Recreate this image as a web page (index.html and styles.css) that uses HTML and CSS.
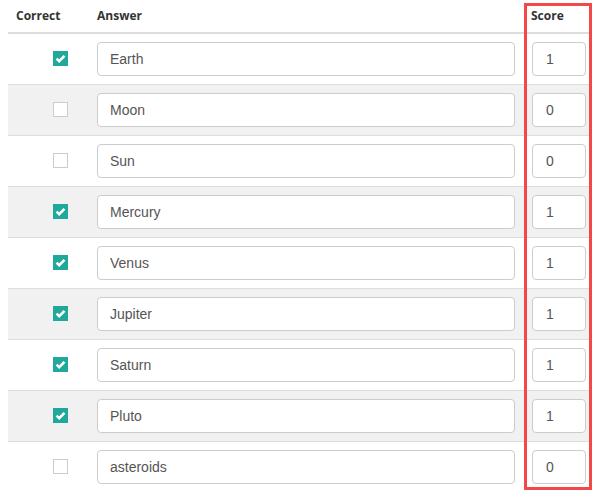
FILE: index.html
```html
<!DOCTYPE html>
<html lang="en">
<head>
    <meta charset="UTF-8">
    <meta name="viewport" content="width=device-width, initial-scale=1.0">
    <title>Answers</title>
    <link rel="stylesheet" href="styles.css">
</head>
<body>
    <div class="answers">
        <table class="answer-table">
            <thead>
                <tr>
                    <th class="col-correct">Correct</th>
                    <th class="col-answer">Answer</th>
                    <th class="col-score">Score</th>
                </tr>
            </thead>
            <tbody id="answerRows"></tbody>
        </table>
        <div class="score-highlight"></div>
    </div>

    <script>
        const answers = [
            { text: "Earth", correct: true },
            { text: "Moon", correct: false },
            { text: "Sun", correct: false },
            { text: "Mercury", correct: true },
            { text: "Venus", correct: true },
            { text: "Jupiter", correct: true },
            { text: "Saturn", correct: true },
            { text: "Pluto", correct: true },
            { text: "asteroids", correct: false }
        ];
        function renderRows() {
            const body = document.getElementById('answerRows');
            body.innerHTML = '';
            answers.forEach(answer => {
                const row = document.createElement('tr');
                row.innerHTML = `
                    <td class="col-correct">
                        <span class="check ${answer.correct ? 'checked' : ''}">
                            <svg viewBox="0 0 15 15" width="15" height="15"><path d="M3.5 7.6 L6.2 10.2 L11.5 4.8" fill="none" stroke="#fff" stroke-width="2.6"/></svg>
                        </span>
                    </td>
                    <td class="col-answer"><input class="field" type="text" value="${answer.text}"></td>
                    <td class="col-score"><input class="field score" type="text" value="${answer.correct ? 1 : 0}"></td>
                `;
                row.querySelector('.check').addEventListener('click', () => {
                    answer.correct = !answer.correct;
                    renderRows();
                });
                body.appendChild(row);
            });
        }
        renderRows();
    </script>
</body>
</html>
```

FILE: styles.css
```css
* {
    box-sizing: border-box;
}

body {
    margin: 0 8px;
    background: #fff;
    font-family: "Liberation Sans", Arial, sans-serif;
    color: #333;
}

.answers {
    position: relative;
    width: 583px;
}

.answer-table {
    width: 100%;
    border-collapse: collapse;
}

.answer-table th {
    height: 33px;
    padding: 0 8px 1px;
    text-align: left;
    font-family: "Open Sans", sans-serif;
    font-size: 12px;
    font-weight: 700;
    color: #333;
    border-bottom: 2px solid #ddd;
    vertical-align: middle;
}

.answer-table td {
    height: 51px;
    padding: 0 8px;
    border-top: 1px solid #ddd;
    vertical-align: middle;
}

.answer-table tbody tr:nth-child(even) {
    background: #f1f1f1;
}

.col-correct {
    width: 81px;
}

.answer-table td.col-correct {
    padding-left: 45px;
}

.col-score {
    width: 68px;
}

.answer-table td.col-score {
    padding: 0 5px 0 9px;
}

.check {
    display: block;
    width: 15px;
    height: 15px;
    border: 1px solid #ccc;
    background: #fff;
    cursor: pointer;
}

.check svg {
    display: none;
}

.check.checked {
    border: none;
    background: #20a89a;
}

.check.checked svg {
    display: block;
}

.field {
    display: block;
    width: 100%;
    height: 34px;
    padding: 0 12px;
    border: 1px solid #ccc;
    border-radius: 4px;
    font-family: "Liberation Sans", Arial, sans-serif;
    font-size: 14px;
    color: #555;
    background: #fff;
    outline: none;
}

.field.score {
    padding-left: 13px;
}

.score-highlight {
    position: absolute;
    top: 3px;
    bottom: 2px;
    right: -1px;
    width: 68px;
    border: 3px solid #f44848;
    pointer-events: none;
}
```
